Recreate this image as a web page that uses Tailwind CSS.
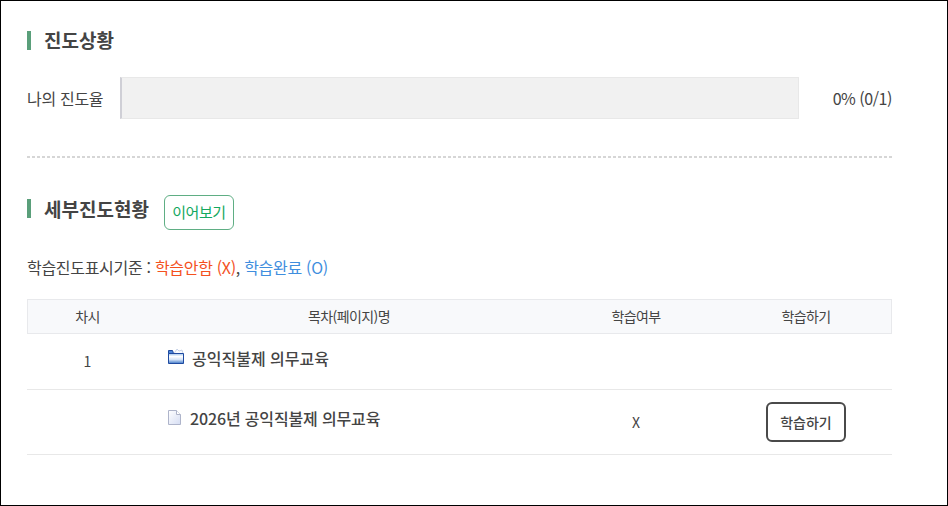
<!DOCTYPE html>
<html lang="ko"><head><meta charset="utf-8"><script src="https://cdn.jsdelivr.net/npm/@tailwindcss/browser@4"></script></head>
<body class="bg-white">
<div class="w-[948px] h-[506px] border border-black bg-white font-['Noto_Sans_CJK_KR','Noto_Sans',sans-serif] text-[#444] overflow-hidden pl-[26px] pr-[55px] pt-[24px]">
  <div class="flex items-center h-[30px]">
    <span class="w-[4px] h-[19px] bg-[#5a9f7a]"></span>
    <h2 class="ml-[13px] text-[19px] font-bold leading-[30px]">진도상황</h2>
  </div>
  <div class="flex items-center mt-[22px] h-[42px]">
    <span class="w-[93px] text-[16px] tracking-[-0.3px]">나의 진도율</span>
    <div class="w-[679px] h-[42px] bg-[#f1f1f1] border border-[#e8e8e8] border-l-2 border-l-[#cfcfd6]"></div>
    <span class="flex-1 text-right text-[16px] tracking-[-0.45px]">0% (0/1)</span>
  </div>
  <div class="mt-[37px] h-[2px] bg-[repeating-linear-gradient(to_right,#d6d6d6_0,#d6d6d6_3px,transparent_3px,transparent_5.012px)]"></div>
  <div class="flex items-start mt-[37px] h-[35px]">
    <span class="mt-[4px] w-[4px] h-[19px] bg-[#5a9f7a]"></span>
    <h2 class="ml-[13px] text-[19px] font-bold leading-[28px]">세부진도현황</h2>
    <span class="ml-[15px] w-[70px] h-[35px] flex items-center justify-center border border-[#5fae84] rounded-[6px] text-[15px] text-[#13a860] tracking-[-0.5px]">이어보기</span>
  </div>
  <p class="mt-[23px] h-[28px] leading-[28px] text-[16px] tracking-[-0.3px]">학습진도표시기준 : <span class="text-[#f4511e]">학습안함 (X)</span>, <span class="text-[#3f8ede]">학습완료 (O)</span></p>
  <div class="mt-[18px] w-[865px] text-[14px]">
    <div class="grid grid-cols-[119px_404px_170px_170px] h-[35px] items-center text-center bg-[#f8f9fb] border border-[#e8e9ec] tracking-[-0.6px]">
      <span>차시</span><span>목차(페이지)명</span><span>학습여부</span><span>학습하기</span>
    </div>
    <div class="grid grid-cols-[120px_404px_170px_171px] h-[56px] items-center border-b border-[#e8e8e8]">
      <span class="text-center text-[14px] pl-[1px]">1</span>
      <span class="flex items-center pl-[21px] text-[16px] font-medium pb-[8px]">
        <svg class="mr-[8px] mb-[3px] shrink-0" width="16" height="16" viewBox="0 0 16 16"><defs><linearGradient id="fb" x1="0" y1="0" x2="0" y2="1"><stop offset="0" stop-color="#9cc2ee"/><stop offset=".3" stop-color="#ffffff"/><stop offset=".6" stop-color="#d6e5f8"/><stop offset="1" stop-color="#3f78c8"/></linearGradient></defs><path d="M6 5.500l3-4.500 2 2 3-1 1 3.500z" fill="#f8fafe" stroke="#b4c4e0" stroke-width=".7"/><path d="M.5 5.500v-3h4l1 3z" fill="#4d86d8" stroke="#1f4aa0"/><path d="M.5 5.500h15v10h-15z" fill="url(#fb)" stroke="#1f4aa0"/></svg>
        공익직불제 의무교육</span>
      <span></span><span></span>
    </div>
    <div class="grid grid-cols-[120px_404px_170px_171px] h-[65px] items-center border-b border-[#e8e8e8]">
      <span></span>
      <span class="flex items-center pl-[21px] text-[16px] font-medium tracking-[-0.15px] pb-[8px]">
        <svg class="mr-[9px] mb-[2px] shrink-0" width="13" height="15" viewBox="0 0 13 15"><defs><linearGradient id="dc" x1="0" y1="0" x2="1" y2="1"><stop offset="0" stop-color="#ffffff"/><stop offset="1" stop-color="#d5ddf3"/></linearGradient></defs><path d="M.5 .5h8l4 4v10h-12z" fill="url(#dc)" stroke="#aeb4ca"/><path d="M8.500 .5v4h4" fill="#fff" stroke="#aeb4ca"/></svg>
        2026년 공익직불제 의무교육</span>
      <span class="text-center text-[14px]">X</span>
      <span class="flex justify-center pr-[1px]"><span class="w-[80px] h-[40px] flex items-center justify-center border-2 border-[#4a4a4a] rounded-[6px] font-medium">학습하기</span></span>
    </div>
  </div>
</div>
</body></html>
